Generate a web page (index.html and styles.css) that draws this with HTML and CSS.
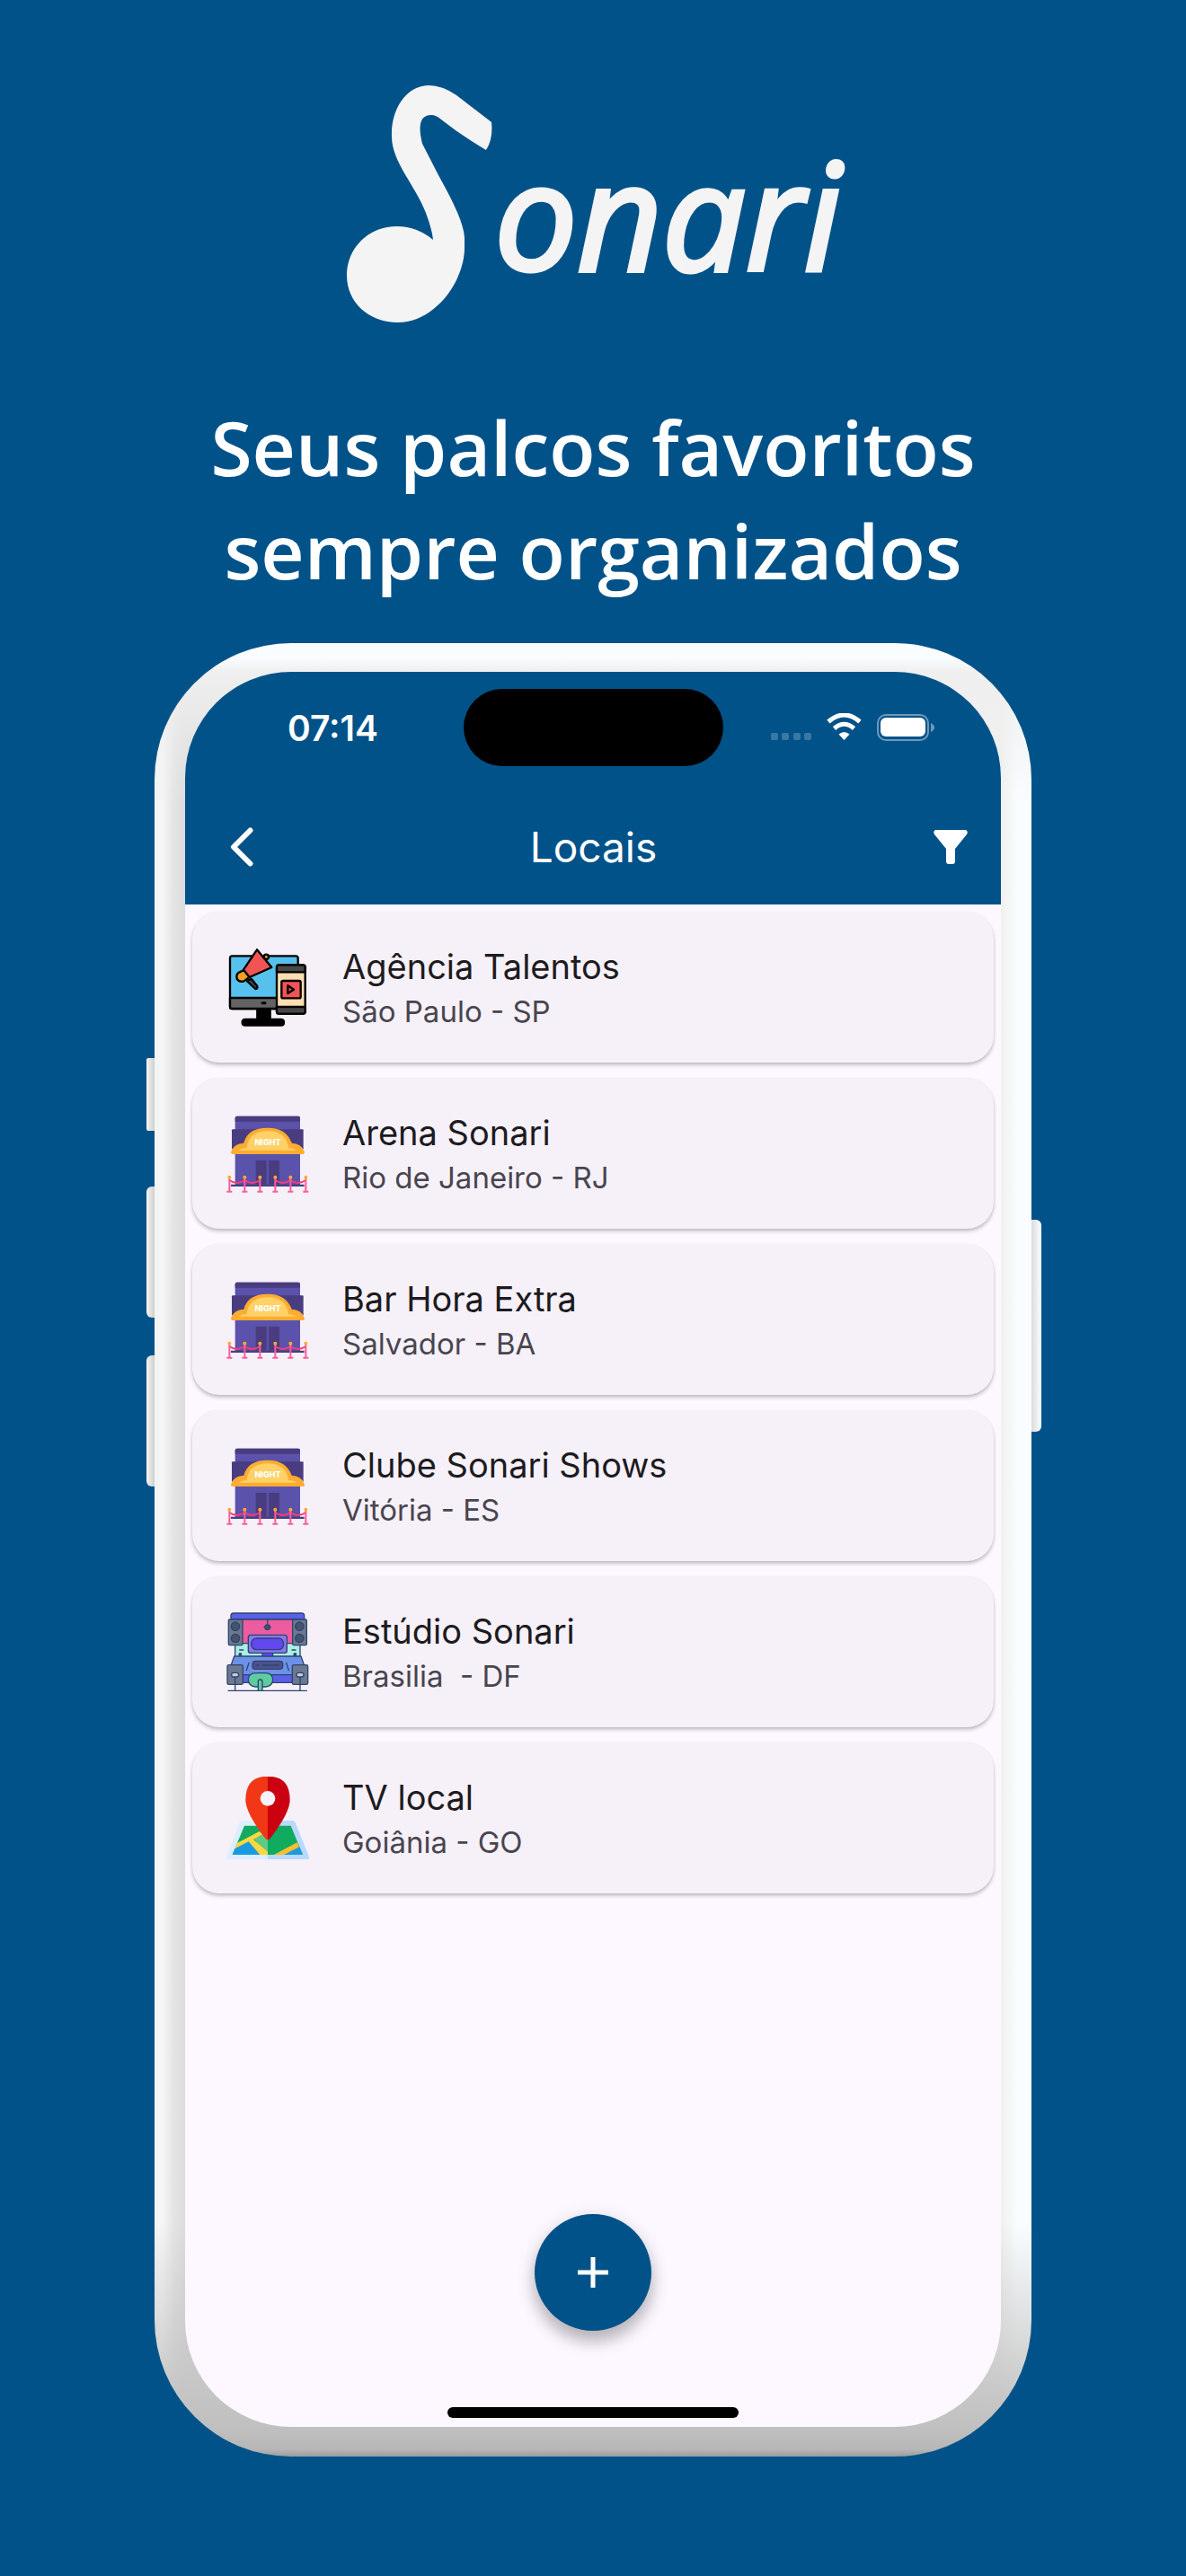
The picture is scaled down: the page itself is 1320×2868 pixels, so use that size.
FILE: index.html
```html
<!DOCTYPE html>
<html lang="pt-BR">
<head>
    <meta charset="UTF-8">
    <meta name="viewport" content="width=device-width, initial-scale=1.0">
    <title>Sonari - Locais</title>
    <link rel="stylesheet" href="styles.css">
</head>
<body>
    <!-- shared list icons -->
    <svg class="sprite" aria-hidden="true">
        <symbol id="icon-agency" viewBox="48 54 276 276">
            <g stroke="#000" stroke-width="7" stroke-linejoin="round" stroke-linecap="round">
                <rect x="60" y="88" width="227" height="176" rx="7" fill="#57c1ee"/>
                <path d="M60 228h227v29q0 7-7 7H67q-7 0-7-7z" fill="#636363"/>
                <path d="M168 245h9" stroke-width="9"/>
                <path d="M151 266h43v34h36q10 0 10 10t-10 10H111q-10 0-10-10t10-10h40z" fill="#000"/>
                <circle cx="181" cy="91" r="8" fill="#f9a01f"/>
                <path d="M117 172l14-8 20 25q2 9-6 9z" fill="#484848"/>
                <path d="M107 135l18 23-18 14q-17 5-24-8-4-15 9-22z" fill="#f9a01f"/>
                <path d="M150 67l49 59-74 33-20-25z" fill="#f05454"/>
                <rect x="216" y="118" width="95" height="163" rx="7" fill="#ffdfb2"/>
                <path d="M216 142h95v-17q0-7-7-7h-81q-7 0-7 7zM216 258h95v16q0 7-7 7h-81q-7 0-7-7z" fill="#484848"/>
                <rect x="232" y="171" width="64" height="58" rx="5" fill="#f05454"/>
                <path d="M253 187v26l20-13z" fill="#f05454"/>
            </g>
        </symbol>
        <symbol id="icon-club" viewBox="48 54 276 276">
            <path d="M77 74q0-6 6-6h205q6 0 6 6v226H77z" fill="#5b52ab"/>
            <path d="M77 86V74q0-6 6-6h205q6 0 6 6v12z" fill="#493d80"/>
            <path d="M66 115q0-3 3-3h233q3 0 3 3v63H66z" fill="#493d80"/>
            <path d="M63 296h245v7H63z" fill="#493d80"/>
            <path d="M146 216h36v80h-36zM189 216h36v80h-36z" fill="#493d80"/>
            <path d="M67 195q-6-3-3-10 10-25 42-27 12-51 80-51 62 0 80 51 32 2 42 27 3 7-3 10z" fill="#ffac30"/>
            <path d="M87 182q12-8 29-8 5-56 70-56 62 0 69 56 16 0 29 8z" fill="#ffd166"/>
            <text class="night" x="186" y="165" text-anchor="middle">NIGHT</text>
            <g fill="none" stroke="#ff5c9c" stroke-width="6">
                <path d="M58 282q25 18 51 0 25 18 51 0M211 282q25 18 51 0 25 18 51 0" stroke="#f93a78"/>
                <path d="M58 275v44M109 275v44M160 275v44M211 275v44M262 275v44M313 275v44"/>
                <path d="M49 320h18M100 320h18M151 320h18M202 320h18M253 320h18M304 320h18"/>
            </g>
            <g fill="#ffac30">
                <circle cx="58" cy="272" r="6"/><circle cx="109" cy="272" r="6"/><circle cx="160" cy="272" r="6"/>
                <circle cx="211" cy="272" r="6"/><circle cx="262" cy="272" r="6"/><circle cx="313" cy="272" r="6"/>
            </g>
        </symbol>
        <symbol id="icon-studio" viewBox="48 54 276 276">
            <g stroke="#2d456f" stroke-width="4" stroke-linejoin="round" stroke-linecap="round">
                <path d="M63 84V72q0-9 9-9h227q9 0 9 9v12z" fill="#5a60e8"/>
                <path d="M77 84h217v82H77z" fill="#ec5c9f"/>
                <path d="M77 164h217v48H77z" fill="#a9efe2"/>
                <path d="M168 190h35v22h-35z" fill="#6148f0"/>
                <path d="M74 207h223l22 62H52z" fill="#6c91e8"/>
                <path d="M74 269h223v26H74z" fill="#5a60e8"/>
                <rect x="55" y="84" width="47" height="86" rx="4" fill="#6c7890"/>
                <rect x="269" y="84" width="47" height="86" rx="4" fill="#6c7890"/>
                <g fill="#45536c">
                    <circle cx="78" cy="107" r="14"/><circle cx="78" cy="147" r="14"/>
                    <circle cx="292" cy="107" r="14"/><circle cx="292" cy="147" r="14"/>
                </g>
                <path d="M185 84v18M174 110h22"/>
                <circle cx="185" cy="110" r="8" fill="#45536c"/>
                <rect x="121" y="136" width="129" height="60" rx="8" fill="#8978ee"/>
                <rect x="131" y="147" width="108" height="38" rx="17" fill="#6148f0"/>
                <path d="M92 186h12M267 186h12M123 229l-8 25M248 229l8 25"/>
                <circle cx="94" cy="201" r="4" fill="#2d456f"/><circle cx="277" cy="201" r="4" fill="#2d456f"/>
                <rect x="135" y="223" width="101" height="27" rx="10" fill="#50508e"/>
                <path d="M147 237h9M167 237h56"/>
                <rect x="51" y="236" width="52" height="65" rx="5" fill="#6c7890"/>
                <rect x="268" y="236" width="52" height="65" rx="5" fill="#6c7890"/>
                <path d="M77 275v47M294 275v47M54 322h262"/>
                <rect x="65" y="262" width="24" height="14" rx="7" fill="#c6cbe0"/>
                <rect x="282" y="262" width="24" height="14" rx="7" fill="#c6cbe0"/>
                <path d="M146 263h32q24 0 25 22-1 23-25 24h-32q-24-1-25-24 1-22 25-22z" fill="#5dcc9f"/>
                <path d="M154 322v-31q0-6 7-6t7 6v31z" fill="#5dcc9f"/>
            </g>
        </symbol>
        <symbol id="icon-map" viewBox="48 54 276 276">
            <path d="M102 201h84v130H54q-9 0-6-9l44-115q3-6 10-6z" fill="#dceeff"/>
            <path d="M186 201h84q6 0 8 6l46 115q2 9-6 9H186z" fill="#b9d9ff"/>
            <path d="M108 218h155l40 97H68z" fill="#11ab60"/>
            <path d="M140 262l46-22v75z" fill="#60ca86"/>
            <path d="M77 293l48-25 43 47H68z" fill="#1a9be1"/>
            <path d="M240 315l52-27 11 27z" fill="#1a9be1"/>
            <path d="M84 276l74-39 11 10-31 17 48 41v10h-26l-38-44-46 24z" fill="#ffd73e"/>
            <path d="M207 315l77-41 7 15-51 26z" fill="#ffbf2d"/>
            <path d="M186 53v212q-6 0-10-7-64-84-64-127 0-78 74-78z" fill="#f13716"/>
            <path d="M186 53v212q6 0 10-7 64-84 64-127 0-78-74-78z" fill="#cb0011"/>
            <circle cx="186" cy="127" r="25" fill="#f6f1fa"/>
        </symbol>
    </svg>

    <header class="hero">
        <div class="logo">
            <svg class="logo-note" viewBox="0 0 166 266" aria-hidden="true">
                <path d="M163 42L124 12Q108 1 93 1C66 2 51 30 52 58C52 86 78 112 90 143Q97 162 98 173Q80 158 58 158C26 158 2 182 2 213C2 242 26 265 59 265C98 265 132 222 133 183V171C132 150 112 116 104 101L86 66Q78 34 96 34Q101 34 107 39C122 51 140 63 157 73Q165 61 163 42Z"/>
            </svg>
            <span class="logo-text">onari</span>
        </div>
        <h1>Seus palcos favoritos<br>sempre organizados</h1>
    </header>

    <main class="phone">
        <span class="side-button mute"></span>
        <span class="side-button volume-up"></span>
        <span class="side-button volume-down"></span>
        <span class="side-button power"></span>

        <div class="screen">
            <div class="top">
                <div class="status-bar">
                    <span class="time">07:14</span>
                    <span class="island"></span>
                    <svg class="status-icons" viewBox="0 0 184 32" aria-hidden="true">
                        <g fill="#fff" opacity="0.22">
                            <rect x="1" y="22" width="8" height="8" rx="2"/>
                            <rect x="13" y="22" width="8" height="8" rx="2"/>
                            <rect x="26" y="22" width="8" height="8" rx="2"/>
                            <rect x="38" y="22" width="8" height="8" rx="2"/>
                        </g>
                        <path d="M65 9.500Q82.500-5.500 100 9.500M71.500 17Q82.500 7.500 93.500 17" fill="none" stroke="#fff" stroke-width="5"/>
                        <path d="M76.500 23.500Q82.500 18.500 88.500 23.500L82.500 30z" fill="#fff"/>
                        <rect x="120" y="2" width="56" height="28" rx="9" fill="none" stroke="#6b9abb" stroke-width="2"/>
                        <rect x="123" y="5" width="50" height="21" rx="6" fill="#fff"/>
                        <path d="M179 11q4 2 4 5t-4 5z" fill="#6b9abb"/>
                    </svg>
                </div>
                <nav class="app-bar">
                    <button class="icon-button" aria-label="Voltar">
                        <svg class="icon-back" viewBox="0 0 26 44"><path d="M22.500 3.500L4 22l18.500 18.500"/></svg>
                    </button>
                    <h2>Locais</h2>
                    <button class="icon-button" aria-label="Filtrar">
                        <svg class="icon-filter" viewBox="0 0 38 38"><path d="M2 0h34q3 2 1 5L24 21v14q0 3-3 3h-4q-3 0-3-3V21L1 5q-2-3 1-5z"/></svg>
                    </button>
                </nav>
            </div>

            <ul class="places">
                <li class="card">
                    <svg class="card-icon"><use href="#icon-agency"/></svg>
                    <div class="card-text">
                        <h3>Agência Talentos</h3>
                        <p>São Paulo - SP</p>
                    </div>
                </li>
                <li class="card">
                    <svg class="card-icon"><use href="#icon-club"/></svg>
                    <div class="card-text">
                        <h3>Arena Sonari</h3>
                        <p>Rio de Janeiro - RJ</p>
                    </div>
                </li>
                <li class="card">
                    <svg class="card-icon"><use href="#icon-club"/></svg>
                    <div class="card-text">
                        <h3>Bar Hora Extra</h3>
                        <p>Salvador - BA</p>
                    </div>
                </li>
                <li class="card">
                    <svg class="card-icon"><use href="#icon-club"/></svg>
                    <div class="card-text">
                        <h3>Clube Sonari Shows</h3>
                        <p>Vitória - ES</p>
                    </div>
                </li>
                <li class="card">
                    <svg class="card-icon"><use href="#icon-studio"/></svg>
                    <div class="card-text">
                        <h3>Estúdio Sonari</h3>
                        <p>Brasilia&nbsp; - DF</p>
                    </div>
                </li>
                <li class="card">
                    <svg class="card-icon"><use href="#icon-map"/></svg>
                    <div class="card-text">
                        <h3>TV local</h3>
                        <p>Goiânia - GO</p>
                    </div>
                </li>
            </ul>

            <div class="bottom">
                <button class="add-button" aria-label="Adicionar local">
                    <svg viewBox="0 0 34 34"><path d="M17 0v34M0 17h34"/></svg>
                </button>
                <span class="home-indicator"></span>
            </div>
        </div>
    </main>
</body>
</html>
```
FILE: styles.css
```css
* {
    box-sizing: border-box;
}
body {
    margin: 0;
    padding: 94px 0 133px;
    min-height: 100vh;
    background-color: #005289;
    color: #fff;
    font-family: Inter, "Liberation Sans", sans-serif;
}
h1, h2, h3, p, ul {
    margin: 0;
    padding: 0;
    font-weight: 400;
}
button {
    padding: 0;
    border: none;
    background: none;
    cursor: pointer;
}
svg {
    display: block;
}
.sprite {
    display: none;
}
.night {
    font-family: Inter, sans-serif;
    font-size: 27px;
    font-weight: 800;
    fill: #fff;
}

/* Logo and headline */
.hero {
    text-align: center;
}
.logo {
    display: flex;
    justify-content: center;
    height: 266px;
    color: #f4f4f4;
}
.logo-note {
    width: 166px;
    height: 266px;
    fill: currentColor;
}
.logo-text {
    margin-top: 24px;
    font-family: "Open Sans", "Noto Sans", sans-serif;
    font-size: 164px;
    font-weight: 400;
    font-style: italic;
    line-height: 240px;
    -webkit-text-stroke: 5px #f4f4f4;
}
h1 {
    margin-top: 80px;
    font-family: "Open Sans", "Noto Sans", sans-serif;
    font-size: 84px;
    font-weight: 600;
    line-height: 115px;
}

/* Phone */
.phone {
    position: relative;
    width: calc(100% - 48px);
    max-width: 976px;
    margin: 46px auto 0;
    padding: 32px 34px 33px;
    border-radius: 152px;
    background:
        linear-gradient(to bottom, #f9fdff 0, #f9fdff 16px, #efefef 32px, rgba(240, 240, 240, 0) 180px),
        linear-gradient(to top, #9c9d9b 0, #b6b7b6 8px, #bfc0bf 33px, rgba(191, 192, 191, 0) 260px),
        linear-gradient(to right, #f2f4f4 0, #f5f7f6 8px, #e3e3e3 22px, #dcdcdc 34px, #f0f0ee calc(100% - 34px), #f9fdff calc(100% - 16px), #f9fdff 100%);
}
.side-button {
    position: absolute;
    left: -9px;
    width: 9px;
    height: 146px;
    border-radius: 6px 0 0 6px;
    background: linear-gradient(to right, #f4f4f4, #cfcfcf);
}
.mute {
    top: 462px;
    height: 81px;
    border-radius: 2px 0 0 2px;
}
.volume-up {
    top: 605px;
}
.volume-down {
    top: 793px;
}
.power {
    top: 642px;
    left: auto;
    right: -11px;
    width: 11px;
    height: 236px;
    border-radius: 0 6px 6px 0;
    background: linear-gradient(to right, #dcdcdc, #fafdff);
}
.screen {
    overflow: hidden;
    border-radius: 118px;
    background-color: #fdf7ff;
}

/* Status bar and app bar */
.top {
    height: 259px;
    background-color: #005289;
}
.status-bar {
    display: grid;
    grid-template-columns: 1fr 289px 1fr;
    align-items: center;
    padding-top: 19px;
}
.time {
    margin-left: 114px;
    font-size: 39px;
    font-weight: 600;
}
.island {
    height: 86px;
    border-radius: 43px;
    background-color: #000;
}
.status-icons {
    width: 184px;
    height: 32px;
    margin-left: 52px;
}
.app-bar {
    display: flex;
    align-items: center;
    justify-content: space-between;
    height: 96px;
    margin-top: 42px;
    padding: 0 37px 0 50px;
}
.icon-button svg {
    fill: #fff;
}
.icon-back {
    width: 26px;
    height: 44px;
}
.icon-button .icon-back {
    fill: none;
    stroke: #fff;
    stroke-width: 6;
    stroke-linecap: round;
    stroke-linejoin: round;
}
.icon-filter {
    width: 38px;
    height: 38px;
}
h2 {
    font-size: 46px;
    line-height: 60px;
}

/* List */
.places {
    display: flex;
    flex-direction: column;
    gap: 17px;
    padding: 8px;
    list-style: none;
}
.card {
    display: flex;
    align-items: center;
    gap: 37px;
    height: 168px;
    padding: 0 38px;
    border-radius: 30px;
    background-color: #f6f1f9;
    box-shadow: 0 3px 4px rgba(0, 0, 0, 0.2), 0 1px 3px rgba(0, 0, 0, 0.08);
}
.card-icon {
    flex: none;
    width: 92px;
    height: 92px;
}
.card-text {
    padding-top: 4px;
    line-height: 50px;
}
h3 {
    font-size: 38px;
    color: #1d1b20;
}
.card-text p {
    font-size: 33px;
    color: #49454f;
}

/* Add button and home indicator */
.bottom {
    display: flex;
    flex-direction: column;
    align-items: center;
    justify-content: space-between;
    height: 237px;
    margin-top: 349px;
    padding-bottom: 10px;
}
.add-button {
    display: grid;
    place-items: center;
    width: 130px;
    height: 130px;
    border-radius: 50%;
    background-color: #005289;
    box-shadow: 0 12px 18px rgba(0, 0, 0, 0.25), 0 2px 24px rgba(0, 0, 0, 0.08);
}
.add-button svg {
    width: 34px;
    height: 34px;
    stroke: #fff;
    stroke-width: 5;
}
.home-indicator {
    width: 324px;
    height: 12px;
    border-radius: 6px;
    background-color: #000;
}
```
